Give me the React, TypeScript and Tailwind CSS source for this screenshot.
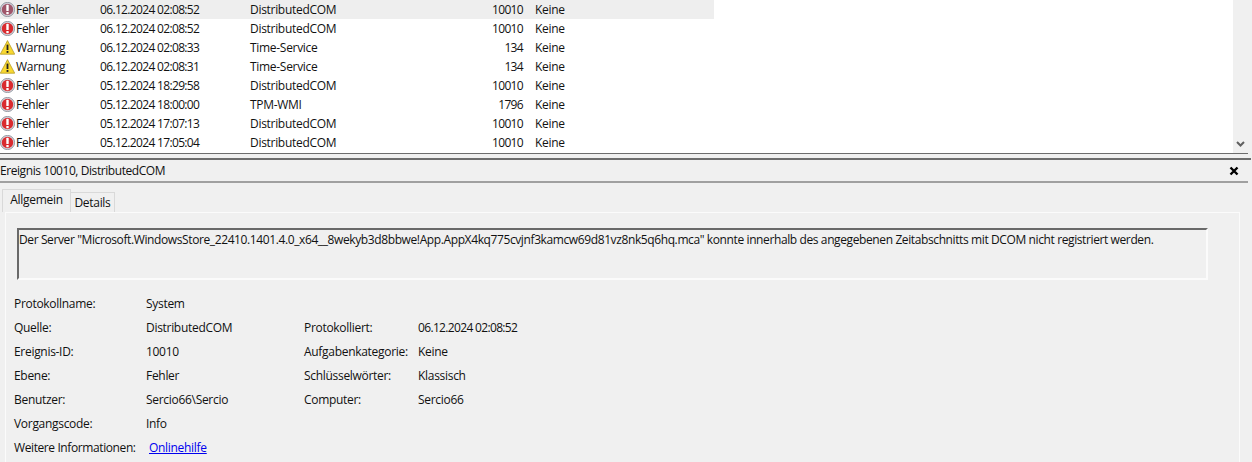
import React from "react";

const events = [
  { level: "Fehler", date: "06.12.2024 02:08:52", source: "DistributedCOM", id: "10010", selected: true },
  { level: "Fehler", date: "06.12.2024 02:08:52", source: "DistributedCOM", id: "10010" },
  { level: "Warnung", date: "06.12.2024 02:08:33", source: "Time-Service", id: "134" },
  { level: "Warnung", date: "06.12.2024 02:08:31", source: "Time-Service", id: "134" },
  { level: "Fehler", date: "05.12.2024 18:29:58", source: "DistributedCOM", id: "10010" },
  { level: "Fehler", date: "05.12.2024 18:00:00", source: "TPM-WMI", id: "1796" },
  { level: "Fehler", date: "05.12.2024 17:07:13", source: "DistributedCOM", id: "10010" },
  { level: "Fehler", date: "05.12.2024 17:05:04", source: "DistributedCOM", id: "10010" },
];

function ErrorIcon({ muted }: { muted?: boolean }) {
  return (
    <svg width="15" height="15" viewBox="0 0 15 15" className="shrink-0">
      <circle cx="7.5" cy="7.5" r="7.1" fill="#d5d7de" stroke="#80848f" strokeWidth="0.8" />
      <circle cx="7.5" cy="7.5" r="5.7" fill={muted ? "#a0566a" : "#d92b2f"} />
      <rect x="6.3" y="2.8" width="2.4" height="6.2" rx="0.6" fill="#ffffff" />
      <rect x="6.3" y="10" width="2.4" height="2.3" rx="0.5" fill="#ffffff" />
    </svg>
  );
}

function WarningIcon() {
  return (
    <svg width="15" height="15" viewBox="0 0 15 15" className="shrink-0">
      <path d="M7.5 0.6 L14.7 14.2 L0.3 14.2 Z" fill="#f8d830" stroke="#b59a2a" strokeWidth="0.8" strokeLinejoin="round" />
      <rect x="6.6" y="4.6" width="1.8" height="5.4" fill="#222222" />
      <rect x="6.6" y="11" width="1.8" height="1.9" fill="#222222" />
    </svg>
  );
}

function EventRow({ e }: { e: (typeof events)[number] }) {
  return (
    <div className={`flex h-[19px] w-[714px] items-center ${e.selected ? "bg-[#eeeeee]" : ""}`}>
      <div className="flex w-[100px] items-center gap-px">
        {e.level === "Fehler" ? <ErrorIcon muted={e.selected} /> : <WarningIcon />}
        <span>{e.level}</span>
      </div>
      <div className="w-[150px] tracking-[-0.66px]">{e.date}</div>
      <div className="w-[200px]">{e.source}</div>
      <div className="w-[73px] text-right tracking-[-0.66px]">{e.id}</div>
      <div className="ml-3">Keine</div>
    </div>
  );
}

const details = [
  ["Protokollname:", "System", "", ""],
  ["Quelle:", "DistributedCOM", "Protokolliert:", "06.12.2024 02:08:52"],
  ["Ereignis-ID:", "10010", "Aufgabenkategorie:", "Keine"],
  ["Ebene:", "Fehler", "Schlüsselwörter:", "Klassisch"],
  ["Benutzer:", "Sercio66\\Sercio", "Computer:", "Sercio66"],
  ["Vorgangscode:", "Info", "", ""],
];

export default function App() {
  return (
    <div className="h-[462px] w-[1252px] overflow-hidden bg-[#f0f0f0] text-[12px] leading-[19px] text-[#111111] [font-family:'Open_Sans',sans-serif] tracking-[-0.3px]">
      {/* event list */}
      <div className="mr-[4px] flex h-[154px] border-b border-[#6d6d6d] bg-white">
        <div className="flex-1">
          {events.map((e, i) => (
            <EventRow key={i} e={e} />
          ))}
        </div>
        <div className="flex w-[15px] flex-col justify-end bg-[#f0f0f0] pb-[3px]">
          <svg width="15" height="10" viewBox="0 0 15 10">
            <path d="M4 2 L7.5 5.5 L11 2" fill="none" stroke="#606060" strokeWidth="2" />
          </svg>
        </div>
      </div>

      {/* detail header */}
      <div className="mt-1 mr-px h-[23px] border-t-2 border-[#6d6d6d]">
        <div className="flex h-[21px] items-center justify-between pr-[12px]">
          <span className="tracking-[-0.43px]">Ereignis 10010, DistributedCOM</span>
          <svg width="10" height="10" viewBox="0 0 10 10">
            <path d="M1.5 1.5 L8.5 8.5 M8.5 1.5 L1.5 8.5" stroke="#000000" strokeWidth="2.4" />
          </svg>
        </div>
      </div>
      <div className="mr-[4px] h-[2px] bg-[#a0a0a0]" />

      {/* tabs */}
      <div className="mt-[6px] ml-[2px] flex h-[23px] items-end">
        <div className="flex h-[23px] w-[69px] items-center justify-center border border-b-0 border-[#d9d9d9] bg-[#f0f0f0] pb-[3px]">
          Allgemein
        </div>
        <div className="flex h-[20px] w-[44px] items-center justify-center border border-b-0 border-l-0 border-[#d9d9d9] bg-[#f0f0f0]">
          Details
        </div>
      </div>

      {/* tab panel */}
      <div className="ml-[5px] mr-[12px] h-[300px] border-t border-r border-l border-[#fbfbfb] pt-[15px]">
        <div className="ml-[11px] mr-[31px] h-[52px] border-2 border-[#fbfbfb] border-t-[#696969] border-l-[#696969] tracking-[-0.39px]">
          Der Server "Microsoft.WindowsStore_22410.1401.4.0_x64__8wekyb3d8bbwe!App.AppX4kq775cvjnf3kamcw69d81vz8nk5q6hq.mca" konnte innerhalb des angegebenen Zeitabschnitts mit DCOM nicht registriert werden.
        </div>

        <div className="mt-[11px] ml-[8px]">
          {details.map((d, i) => (
            <div key={i} className="flex h-[24px] items-center">
              <div className="w-[132px]">{d[0]}</div>
              <div className="w-[158px]">{d[1]}</div>
              <div className="w-[114px]">{d[2]}</div>
              <div className={i === 1 ? "tracking-[-0.66px]" : ""}>{d[3]}</div>
            </div>
          ))}
          <div className="flex h-[24px] items-center">
            <div className="w-[135px] tracking-[-0.4px]">Weitere Informationen:</div>
            <a className="text-[#0000ee] underline">Onlinehilfe</a>
          </div>
        </div>
      </div>
    </div>
  );
}
